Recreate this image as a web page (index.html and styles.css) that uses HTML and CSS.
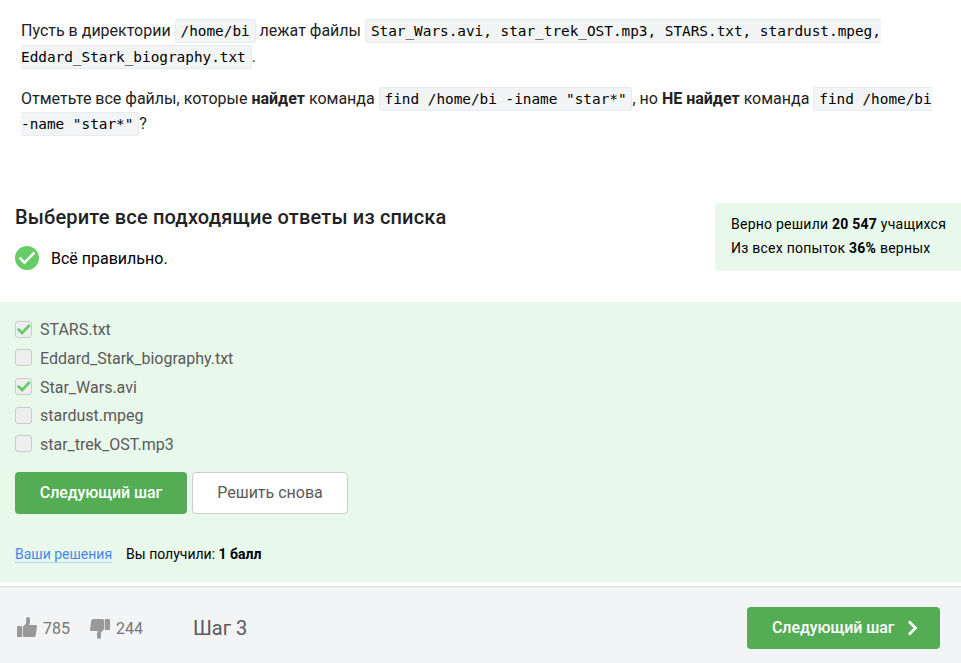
FILE: index.html
```html
<!DOCTYPE html>
<html lang="ru">
<head>
<meta charset="utf-8">
<title>Шаг 3</title>
<link rel="stylesheet" href="styles.css">
</head>
<body>
<main>
  <section class="task">
    <p>Пусть в директории <code>/home/bi</code> лежат файлы <code>Star_Wars.avi, star_trek_OST.mp3, STARS.txt, stardust.mpeg, Eddard_Stark_biography.txt</code>.</p>
    <p>Отметьте все файлы, которые <b>найдет</b> команда <code>find /home/bi -iname "star*"</code>, но <b>НЕ найдет</b> команда <code>find /home/bi -name "star*"</code>?</p>
  </section>
  <section class="head">
    <div>
      <h1>Выберите все подходящие ответы из списка</h1>
      <div class="status">
        <svg width="24" height="24" viewBox="0 0 24 24"><circle cx="12" cy="12" r="12" fill="#66cc66"/><path d="M4.500 11.700l5 5L19.500 6.500" fill="none" stroke="#fff" stroke-width="2.500"/></svg>
        <span>Всё правильно.</span>
      </div>
    </div>
    <aside class="stats">
      <div>Верно решили <b>20 547</b> учащихся</div>
      <div>Из всех попыток <b>36%</b> верных</div>
    </aside>
  </section>
  <section class="quiz">
    <ul class="options">
      <li><span class="box"><svg width="15" height="15" viewBox="0 0 15 15"><path d="M1.800 6.700l4.300 4.300L13.700 3"/></svg></span><span>STARS.txt</span></li>
      <li><span class="box"></span><span>Eddard_Stark_biography.txt</span></li>
      <li><span class="box"><svg width="15" height="15" viewBox="0 0 15 15"><path d="M1.800 6.700l4.300 4.300L13.700 3"/></svg></span><span>Star_Wars.avi</span></li>
      <li><span class="box"></span><span>stardust.mpeg</span></li>
      <li><span class="box"></span><span>star_trek_OST.mp3</span></li>
    </ul>
    <div class="actions">
      <button class="btn primary next">Следующий шаг</button>
      <button class="btn again">Решить снова</button>
    </div>
    <div class="result"><a href="#">Ваши решения</a><span>Вы получили: <b>1 балл</b></span></div>
  </section>
</main>
<footer>
  <div class="vote up">
    <svg width="20" height="20" viewBox="0 0 20 20"><path d="M1 9h3.700q.5 0 .5.500v10q0 .5-.5.500H1q-1 0-1-1v-9q0-1 1-1zM5.900 10.500Q5.900 9.500 6.700 8.900L9 6.500V2q0-2 2-2t2 2v3.500l-.8 2.500h6.300q1.700 0 1.500 1.700l-1.300 8.800Q18.400 20 16.800 20H7.500q-1.600 0-1.600-1.600z"/></svg>
    <span>785</span>
  </div>
  <div class="vote down">
    <svg width="20" height="20" viewBox="0 0 20 20"><path transform="rotate(180 10 10)" d="M1 9h3.700q.5 0 .5.500v10q0 .5-.5.500H1q-1 0-1-1v-9q0-1 1-1zM5.900 10.500Q5.900 9.500 6.700 8.900L9 6.500V2q0-2 2-2t2 2v3.500l-.8 2.500h6.300q1.700 0 1.500 1.700l-1.300 8.800Q18.400 20 16.800 20H7.500q-1.600 0-1.600-1.600z"/></svg>
    <span>244</span>
  </div>
  <div class="step">Шаг 3</div>
  <button class="btn primary forward"><span>Следующий шаг</span><svg width="11" height="16" viewBox="0 0 11 16"><path d="M2 1.500L8.500 8 2 14.500" fill="none" stroke="#fff" stroke-width="2.800"/></svg></button>
</footer>
</body>
</html>
```
FILE: styles.css
```css
* { box-sizing: border-box; }
body {
  margin: 0;
  height: 663px;
  display: flex;
  flex-direction: column;
  background: #fff;
  color: #000;
  font-family: Roboto, "Liberation Sans", sans-serif;
  font-size: 16px;
  overflow: hidden;
}
main { height: 586px; flex: none; }
svg { display: block; flex: none; }
.task {
  height: 203px;
  padding: 18px 21px 0;
  color: #222;
  line-height: 25.6px;
}
.task p { margin: 0 0 16.8px; }
.task p:last-child { line-height: 25.2px; }
.task code {
  padding: 3px 4.9px;
  border: 1px solid #e9eaef;
  border-radius: 3px;
  background: #f3f4f6;
  color: #000;
  font-family: "DejaVu Sans Mono", monospace;
  font-size: 14.4px;
  line-height: 1;
  letter-spacing: -0.02px;
}
.head {
  height: 99px;
  display: flex;
  justify-content: space-between;
  align-items: flex-start;
  padding-left: 15px;
}
h1 {
  margin: 0;
  color: #222;
  font-size: 20px;
  line-height: 28px;
  font-weight: 500;
  letter-spacing: 0.17px;
}
.status {
  display: flex;
  align-items: center;
  gap: 12px;
  margin-top: 15px;
  line-height: 24px;
}
.status span { padding-top: 1px; line-height: 23px; }
.stats {
  width: 246px;
  height: 68px;
  padding: 9px 0 0 16px;
  background: #e8f8ea;
  border-radius: 4px 0 0 4px;
  font-size: 14px;
  line-height: 24px;
  letter-spacing: 0.24px;
  white-space: nowrap;
}
.quiz {
  height: 280px;
  padding: 13px 15px 0;
  background: #e8f8ea;
}
.options {
  height: 144px;
  margin: 0;
  padding: 0;
  list-style: none;
  color: #5a5a5a;
  line-height: 26px;
}
.options li { display: flex; align-items: center; height: 28.7px; }
.options li > span:last-child { padding-top: 2px; }
.box {
  width: 17px;
  height: 17px;
  margin: 0 8px 0.4px 0;
  border: 1px solid #ccc;
  border-radius: 3px;
  background: #eee;
}
.box path { fill: none; stroke: #66cc66; stroke-width: 2.7; }
.actions { display: flex; gap: 5px; margin-top: 13px; }
.btn {
  height: 42px;
  padding: 0;
  border: 0;
  border-radius: 4px;
  font: 16px Roboto, "Liberation Sans", sans-serif;
}
.primary { background: #54ad54; color: #fff; font-weight: 500; letter-spacing: -0.08px; }
.next { width: 172px; padding-bottom: 1px; }
.again {
  width: 156px;
  padding-bottom: 1px;
  border: 1px solid #ccc;
  background: #fff;
  color: #5a5a5a;
}
.result {
  display: flex;
  gap: 14px;
  margin-top: 32px;
  font-size: 14px;
  line-height: 16px;
}
.result a {
  color: #4a86e8;
  text-decoration: none;
  border-bottom: 1px solid #b3d9f2;
}
footer {
  height: 77px;
  flex: none;
  display: flex;
  align-items: center;
  padding: 6px 21px 0 17px;
  border-top: 1px solid #dcdde1;
  background: #f3f4f6;
}
.vote {
  display: flex;
  align-items: center;
  gap: 6px;
  color: #777;
}
.vote svg { fill: #999; }
.up { width: 73px; }
.down { width: 103px; }
.up svg { margin-top: -2px; }
.down svg { margin-top: 2px; }
.step { color: #5a5a5a; font-size: 20px; }
.forward {
  width: 193px;
  margin: -1px 0 0 auto;
  display: flex;
  align-items: center;
  padding-left: 25px;
}
.forward svg { margin-left: 13px; }
```
